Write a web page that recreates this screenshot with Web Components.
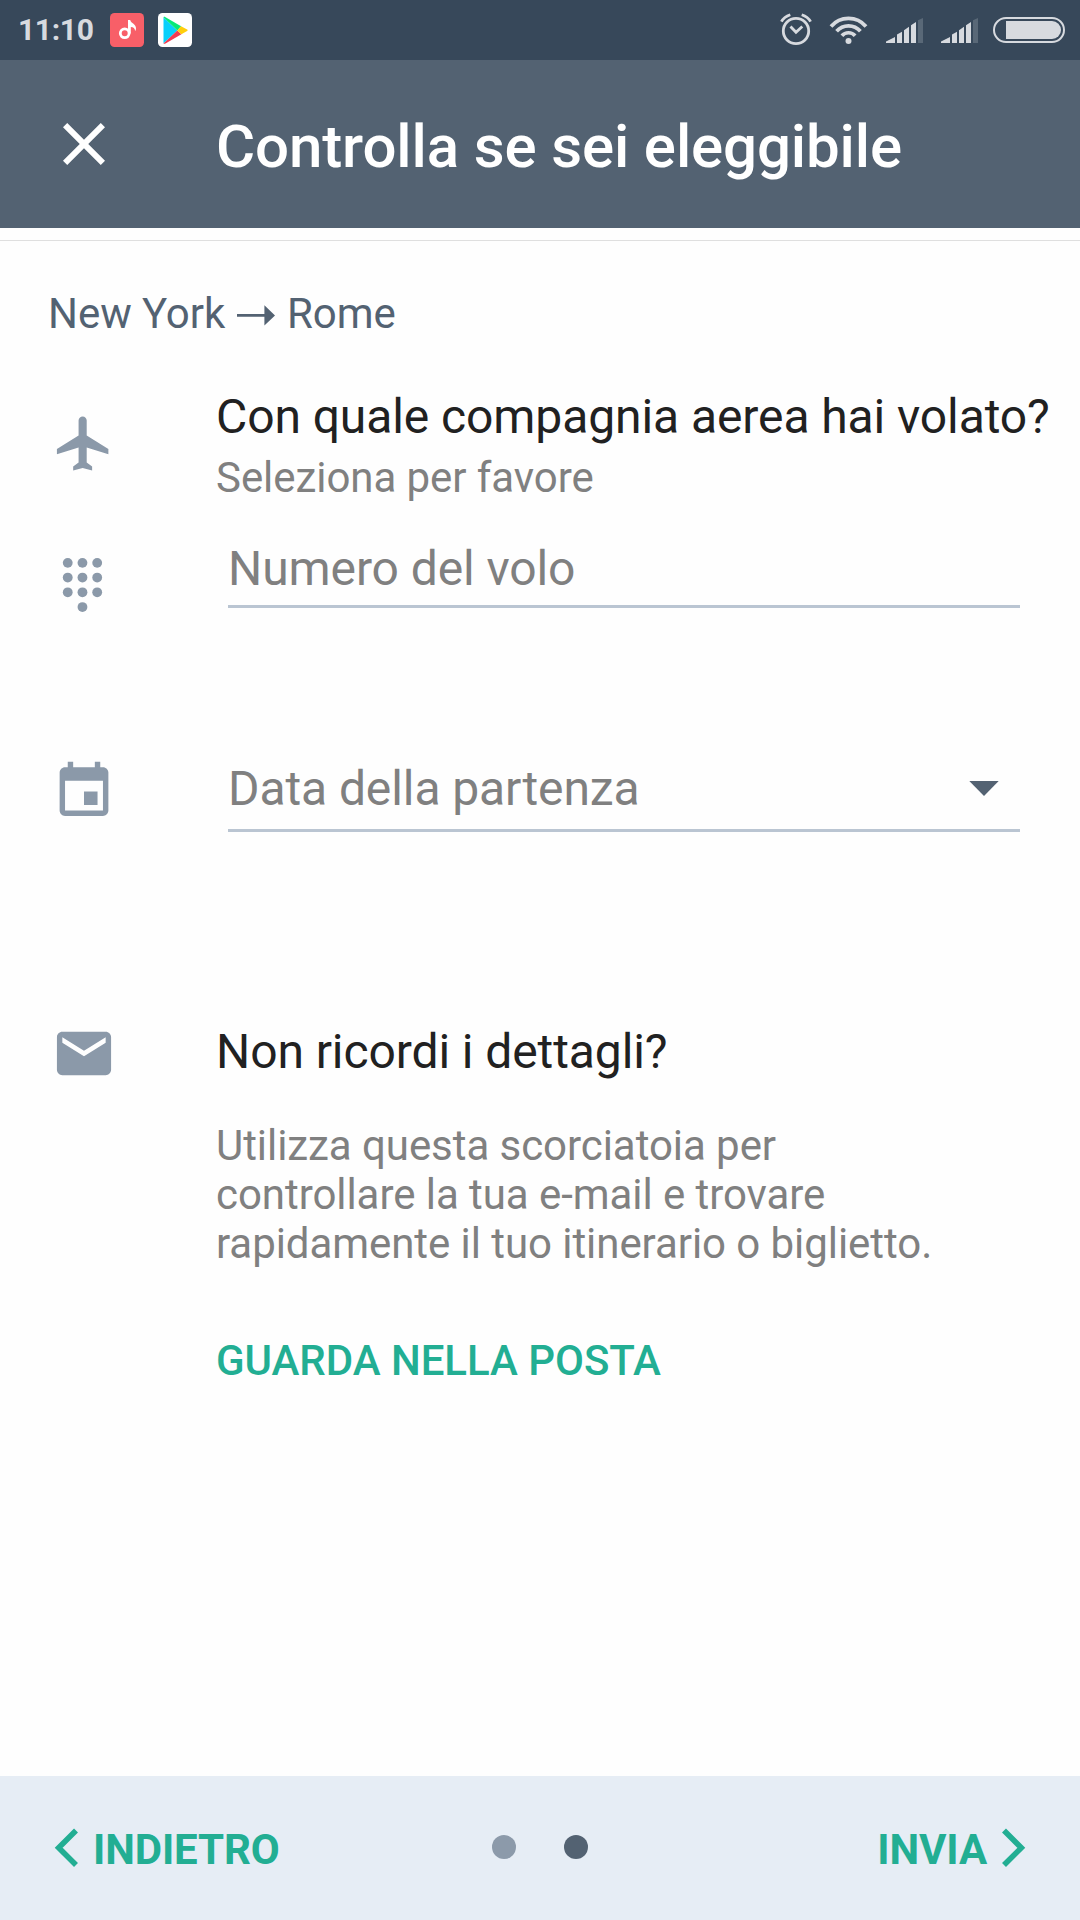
<!DOCTYPE html>
<html lang="it">
<head>
<meta charset="utf-8">
<title>Controlla se sei eleggibile</title>
<style>
html,body{margin:0;padding:0;background:#fefefe}
body{font-family:Roboto,"Noto Sans",sans-serif;width:1080px;height:1920px;overflow:hidden}
</style>
</head>
<body>
<eligibility-screen></eligibility-screen>
<script>
function define(name, html){
  const t=document.createElement('template');
  t.innerHTML=html;
  customElements.define(name,class extends HTMLElement{
    constructor(){super();this.attachShadow({mode:'open'}).append(t.content.cloneNode(true));}
  });
}

define('signal-bars',`
<style>:host{display:block;width:37px;height:26px}svg{display:block}</style>
<svg width="37" height="26" viewBox="0 0 37 26" fill="#d7dadf">
<path d="M0 26v-1.5L9 20v6zM11 26V17.6l5-2.8V26zM18 26V13.2l5-3.4V26zM25 26V8.2l5-3.2V26z"/>
<path d="M32 26V3.2L37 1v25z" fill="#596877"/></svg>`);

define('status-bar',`
<style>
:host{display:flex;box-sizing:border-box;height:60px;background:#37485a;color:#d7dadf;padding:0 15px 0 18px;align-items:center}
svg{display:block;flex:none}
time{font-size:30px;line-height:36px;font-weight:700;width:92px;letter-spacing:-.35px}
.music{margin-right:14px}.space{flex:1}
.alarm{margin-right:17px}.wifi{margin-right:18px}
.s1{margin:0 18px 0 0}.s2{margin:0 15px 0 0}
</style>
<time>11:10</time>
<svg class="music" width="34" height="34" viewBox="0 0 34 34"><rect width="34" height="34" rx="4.5" fill="#f85f68"/><circle cx="14.7" cy="20.3" r="4.4" fill="none" stroke="#fff" stroke-width="2.8"/><path d="M18 7h2.2c.8 3.400 6 4 5.800 8.400 0 1.200-.3 2.100-.9 2.600-.2-2.600-1.600-3.600-4.300-3.900V20.500H18z" fill="#fff"/></svg>
<svg width="34" height="34" viewBox="0 0 34 34"><rect width="34" height="34" rx="4.5" fill="#fff"/><path d="M5.5 4.2v26.300L19.300 17.400z" fill="#08d0fb"/><path d="M5.5 4.2c.5-.5 1.300-.4 2 0l15.600 9-3.800 4.200z" fill="#05e978"/><path d="M5.500 30.500c.5.5 1.300.4 2 0l15.900-9.200-4.100-3.900z" fill="#f23b50"/><path d="M23.100 13.200l6 3.400c.8.4.8 1 0 1.400l-5.700 3.300-4.100-3.900z" fill="#ffce0b"/></svg>
<div class="space"></div>
<svg class="alarm" width="32" height="34" viewBox="0 0 32 34" fill="none" stroke="#d7dadf" stroke-width="2.800"><circle cx="16" cy="18" r="12.700"/><path d="M10.500 13.500l5.500 5.800 6.300-5.800M1.400 8.700C3.200 5.400 6 3.300 10.300 1.800M30.600 8.700C28.800 5.400 26 3.300 21.700 1.800"/></svg>
<svg class="wifi" width="39" height="30" viewBox="0 0 39 30" fill="none" stroke="#d7dadf" stroke-width="3.700"><path d="M2 11.500a23 23 0 0 1 35 0M7.600 16.300a15.700 15.700 0 0 1 23.800 0M12.900 20.800a8.700 8.700 0 0 1 13.200 0"/><circle cx="19.500" cy="26" r="3" fill="#d7dadf" stroke="none"/></svg>
<signal-bars class="s1"></signal-bars><signal-bars class="s2"></signal-bars>
<svg width="72" height="26" viewBox="0 0 72 26"><rect x="1" y="1" width="70" height="24" rx="12" fill="none" stroke="#d7dadf" stroke-width="2"/><path d="M13 4h46a9 9 0 0 1 0 18H13z" fill="#d7dadf"/></svg>`);

define('app-header',`
<style>
:host{display:flex;box-sizing:border-box;height:168px;background:#536272;color:#fff;padding:48px 48px 0;align-items:flex-start}
svg{display:block;margin-right:96px}
h1{margin:4px 0 0;font-weight:500;font-size:60px;line-height:70px;letter-spacing:-.13px;white-space:nowrap}
</style>
<svg width="72" height="72" viewBox="0 0 24 24" fill="#fff"><path d="M19 6.410L17.590 5 12 10.590 6.410 5 5 6.410 10.590 12 5 17.590 6.410 19 12 13.410 17.590 19 19 17.590 13.410 12z"/></svg>
<h1><slot></slot></h1>`);

define('route-title',`
<style>:host{display:flex;color:#536272;font-size:42px;line-height:49px;padding-left:48px;white-space:nowrap;letter-spacing:-.05px}
svg{display:block;flex:none;margin:15px 12px 0 11px}
.from{width:178px}</style>
<span class="from"><slot name="from"></slot></span><svg role="img" aria-label="→" width="38" height="22" viewBox="0 0 38 22" fill="#536272"><path d="M0 10.100h27.400V1.200L38 11.400 27.400 21.600v-8.900H0z"/></svg><slot name="to"></slot>`);

/* One line of the form: icon column on the left, slotted body on the right */
define('form-row',`
<style>
:host{display:flex;align-items:flex-start}
.icon{width:164px;flex:none;padding-left:52px}
.body{flex:1;min-width:0}
</style>
<div class="icon"><slot name="icon"></slot></div><div class="body"><slot></slot></div>`);

define('row-icon',`
<style>:host{display:block;color:#8b99a9}::slotted(svg){display:block;transform:translateX(-.5px)}</style><slot></slot>`);

define('row-text',`
<style>
:host{display:block;white-space:nowrap}
.head{color:#212121;font-size:48px;line-height:56px;letter-spacing:-.09px}
.sub{color:#808080;font-size:42px;line-height:49px;letter-spacing:-.06px;margin-top:var(--sub-gap,8px)}
</style>
<div class="head"><slot name="head"></slot></div><div class="sub"><slot name="sub"></slot></div>`);

define('input-line',`
<style>
:host{display:flex;box-sizing:border-box;width:792px;margin-left:12px;border-bottom:3px solid #bac5d2;color:#808080;font-size:48px;line-height:56px;letter-spacing:-.09px;justify-content:space-between;align-items:flex-start}
::slotted(svg){display:block}
</style>
<span><slot></slot></span><slot name="end"></slot>`);

define('text-action',`
<style>:host{display:block;color:#22ae93;font-weight:500;font-size:42px;line-height:49px;letter-spacing:-.04px;white-space:nowrap}</style><slot></slot>`);

define('nav-footer',`
<style>
:host{display:grid;grid-template-columns:1fr auto 1fr;box-sizing:border-box;height:144px;background:#e6edf5;padding:49px 54px 0;color:#22ae93;font-weight:700;font-size:42px;line-height:49px;letter-spacing:-.1px}
.back,.next{display:flex;align-items:flex-start}
.next{justify-content:flex-end}
svg{display:block;margin-top:3px}
.back svg{margin-right:15px}.next svg{margin-left:15px}
.dots{display:flex;gap:48px;padding-top:10px}
i{display:block;width:24px;height:24px;border-radius:50%;background:#8c9aaa}
i.on{background:#536272}
</style>
<div class="back"><svg width="24" height="40" viewBox="0 0 24 40" fill="none" stroke="#22ae93" stroke-width="5.600"><path d="M22 2.500L4.700 19.800 22 37.100"/></svg><slot name="back"></slot></div>
<div class="dots"><i></i><i class="on"></i></div>
<div class="next"><slot name="next"></slot><svg width="24" height="40" viewBox="0 0 24 40" fill="none" stroke="#22ae93" stroke-width="5.600"><path d="M2 2.500l17.300 17.300L2 37.100"/></svg></div>`);

define('eligibility-screen',`
<style>
:host{display:flex;flex-direction:column;width:1080px;height:1920px;background:#fefefe}
main{flex:1;margin-top:12px;border-top:1px solid #dfdfdf}
route-title{margin-top:48px}
.airline{margin-top:51px}.flight{margin-top:39px}.date{margin-top:144px}.mail{margin-top:189px}
.p{padding-top:22px}.d{padding-top:15px}
.number{padding-bottom:8px}
.day{padding:2px 21px 12px 0}
.day svg{margin-top:20px}
.mail row-text{--sub-gap:41px;padding-top:3px}
text-action{margin-top:68px}
</style>
<status-bar></status-bar>
<app-header>Controlla se sei eleggibile</app-header>
<main>
<route-title><span slot="from">New York</span><span slot="to">Rome</span></route-title>
<form-row class="airline">
<row-icon slot="icon" class="p"><svg width="65" height="65" viewBox="0 0 24 24" fill="currentColor"><path d="M21 16v-2l-8-5V3.500c0-.83-.67-1.500-1.500-1.500S10 2.670 10 3.500V9l-8 5v2l8-2.500V19l-2 1.500V22l3.500-1 3.500 1v-1.500L13 19v-5.500l8 2.500z"/></svg></row-icon>
<row-text><span slot="head">Con quale compagnia aerea hai volato?</span><span slot="sub">Seleziona per favore</span></row-text>
</form-row>
<form-row class="flight">
<row-icon slot="icon" class="d"><svg width="62" height="59" viewBox="0 0 62 59" fill="currentColor"><g transform="translate(1.500 -.5) scale(2.455)"><circle cx="6" cy="3" r="2"/><circle cx="12" cy="3" r="2"/><circle cx="18" cy="3" r="2"/><circle cx="6" cy="9" r="2"/><circle cx="12" cy="9" r="2"/><circle cx="18" cy="9" r="2"/><circle cx="6" cy="15" r="2"/><circle cx="12" cy="15" r="2"/><circle cx="18" cy="15" r="2"/><circle cx="12" cy="21" r="2"/></g></svg></row-icon>
<input-line class="number">Numero del volo</input-line>
</form-row>
<form-row class="date">
<row-icon slot="icon"><svg width="65" height="65" viewBox="0 0 24 24" fill="currentColor"><path d="M17 12h-5v5h5v-5zM16 1v2H8V1H6v2H5c-1.110 0-1.990.9-1.990 2L3 19c0 1.100.89 2 2 2h14c1.100 0 2-.9 2-2V5c0-1.100-.9-2-2-2h-1V1h-2zm3 18H5V8h14v11z"/></svg></row-icon>
<input-line class="day">Data della partenza<svg slot="end" width="30" height="15" viewBox="0 0 30 15" fill="#536272"><path d="M.3 0h29.400L15 15z"/></svg></input-line>
</form-row>
<form-row class="mail">
<row-icon slot="icon"><svg width="65" height="65" viewBox="0 0 24 24" fill="currentColor"><path d="M20 4H4c-1.100 0-1.990.9-1.990 2L2 18c0 1.100.9 2 2 2h16c1.100 0 2-.9 2-2V6c0-1.100-.9-2-2-2zm0 4l-8 5-8-5V6l8 5 8-5v2z"/></svg></row-icon>
<row-text><span slot="head">Non ricordi i dettagli?</span><span slot="sub">Utilizza questa scorciatoia per<br>controllare la tua e-mail e trovare<br>rapidamente il tuo itinerario o biglietto.</span></row-text>
<text-action>GUARDA NELLA POSTA</text-action>
</form-row>
</main>
<nav-footer><span slot="back">INDIETRO</span><span slot="next">INVIA</span></nav-footer>`);
</script>
</body>
</html>
